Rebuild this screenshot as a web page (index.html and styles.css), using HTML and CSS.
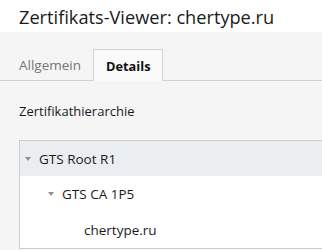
FILE: index.html
```html
<!DOCTYPE html>
<html lang="de">
<head>
    <meta charset="UTF-8">
    <title>Zertifikats-Viewer</title>
    <link rel="stylesheet" href="styles.css">
</head>
<body>
    <header class="viewer-title">Zertifikats-Viewer: chertype.ru</header>

    <nav class="tab-bar">
        <a href="#" class="tab">Allgemein</a>
        <a href="#" class="tab active">Details</a>
    </nav>

    <main class="details">
        <div class="section-label">Zertifikathierarchie</div>
        <ul class="cert-tree">
            <li class="tree-row selected level-0"><span class="twisty"></span>GTS Root R1</li>
            <li class="tree-row level-1"><span class="twisty"></span>GTS CA 1P5</li>
            <li class="tree-row level-2">chertype.ru</li>
        </ul>
    </main>
</body>
</html>
```

FILE: styles.css
```css
/* Page frame */
body {
    margin: 0;
    width: 322px;
    height: 250px;
    overflow: hidden;
    background-color: #f5f5f5;
    color: #1a1a1a;
    font-family: "Open Sans", "Noto Sans", sans-serif;
}

/* Dialog title */
.viewer-title {
    height: 32px;
    line-height: 34px;
    padding-left: 19px;
    background-color: #fff;
    font-size: 18.2px;
    white-space: nowrap;
}

/* Tabs */
.tab-bar {
    display: flex;
    margin-top: 17px;
    height: 31px;
    border-bottom: 1px solid #d2d2d2;
}

.tab {
    display: block;
    height: 31px;
    line-height: 32px;
    font-size: 13.5px;
    color: #767676;
    text-decoration: none;
    box-sizing: border-box;
}

.tab:first-child {
    padding: 0 12px 0 19px;
}

.tab.active {
    padding: 0 11px 0 12px;
    height: 32px;
    margin-bottom: -1px;
    border: 1px solid #d2d2d2;
    border-bottom: none;
    background-color: #fafafa;
    color: #111;
    font-weight: bold;
    font-size: 12.8px;
}

/* Details panel */
.section-label {
    margin: 20px 0 0 19px;
    font-size: 13px;
    line-height: 20px;
}

.cert-tree {
    list-style: none;
    margin: 19px 0 0 19px;
    padding: 0;
    width: 302px;
    border: 1px solid #cdcdcd;
    border-right: none;
    background-color: #fff;
}

.tree-row {
    display: flex;
    align-items: center;
    height: 35px;
    font-size: 13.5px;
    white-space: nowrap;
}

.tree-row.selected {
    background-color: #ebeef0;
}

.level-0 { padding-left: 5px; }
.level-1 { padding-left: 28px; }
.level-2 { padding-left: 64px; height: 37px; }

/* small down arrow in front of expanded nodes */
.twisty {
    width: 0;
    height: 0;
    margin-right: 8px;
    border-left: 3.5px solid transparent;
    border-right: 3.5px solid transparent;
    border-top: 4px solid #8f8f8f;
}
```
